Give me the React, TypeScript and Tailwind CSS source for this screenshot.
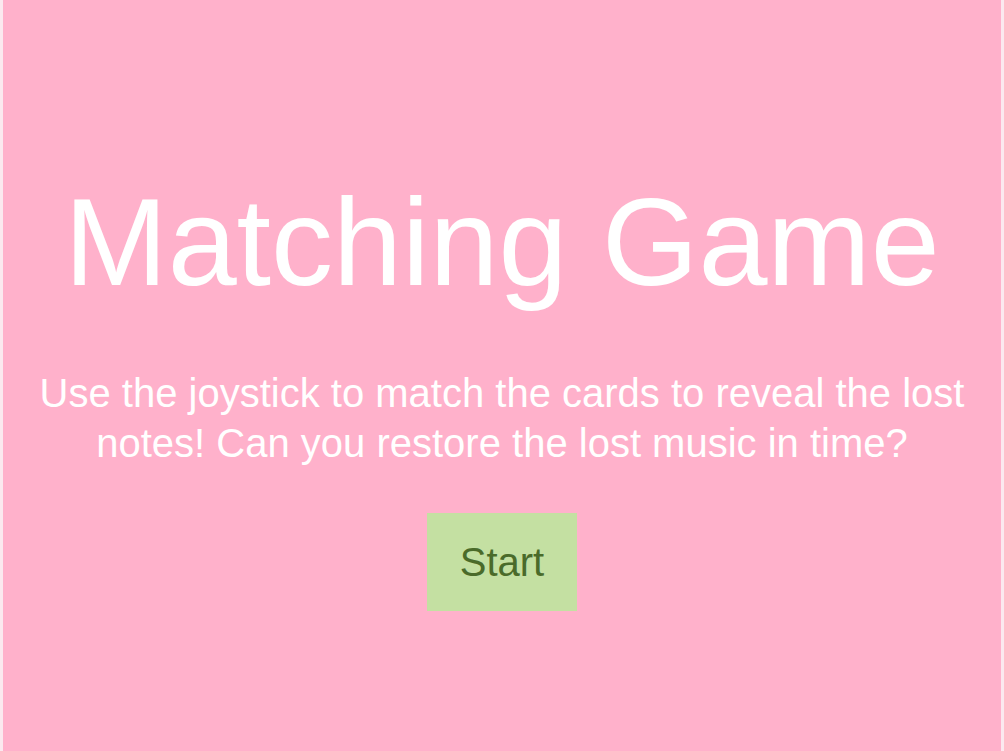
export default function App() {
  return (
    <div className="h-[751px] w-full bg-[#fbe9ef] px-[3px] font-['Liberation_Sans',Arial,sans-serif]">
      <main className="flex h-full flex-col items-center bg-[#ffb1cb] pt-[180px] text-center">
        <h1 className="text-[124px] leading-none text-white">Matching Game</h1>
        <p className="mt-[64px] text-[40px] leading-[50px] text-white">
          Use the joystick to match the cards to reveal the lost
          <br />
          notes! Can you restore the lost music in time?
        </p>
        <button className="mt-[45px] h-[98px] w-[150px] bg-[#c4e0a2] text-[40px] text-[#4a6b2a]">
          Start
        </button>
      </main>
    </div>
  );
}
